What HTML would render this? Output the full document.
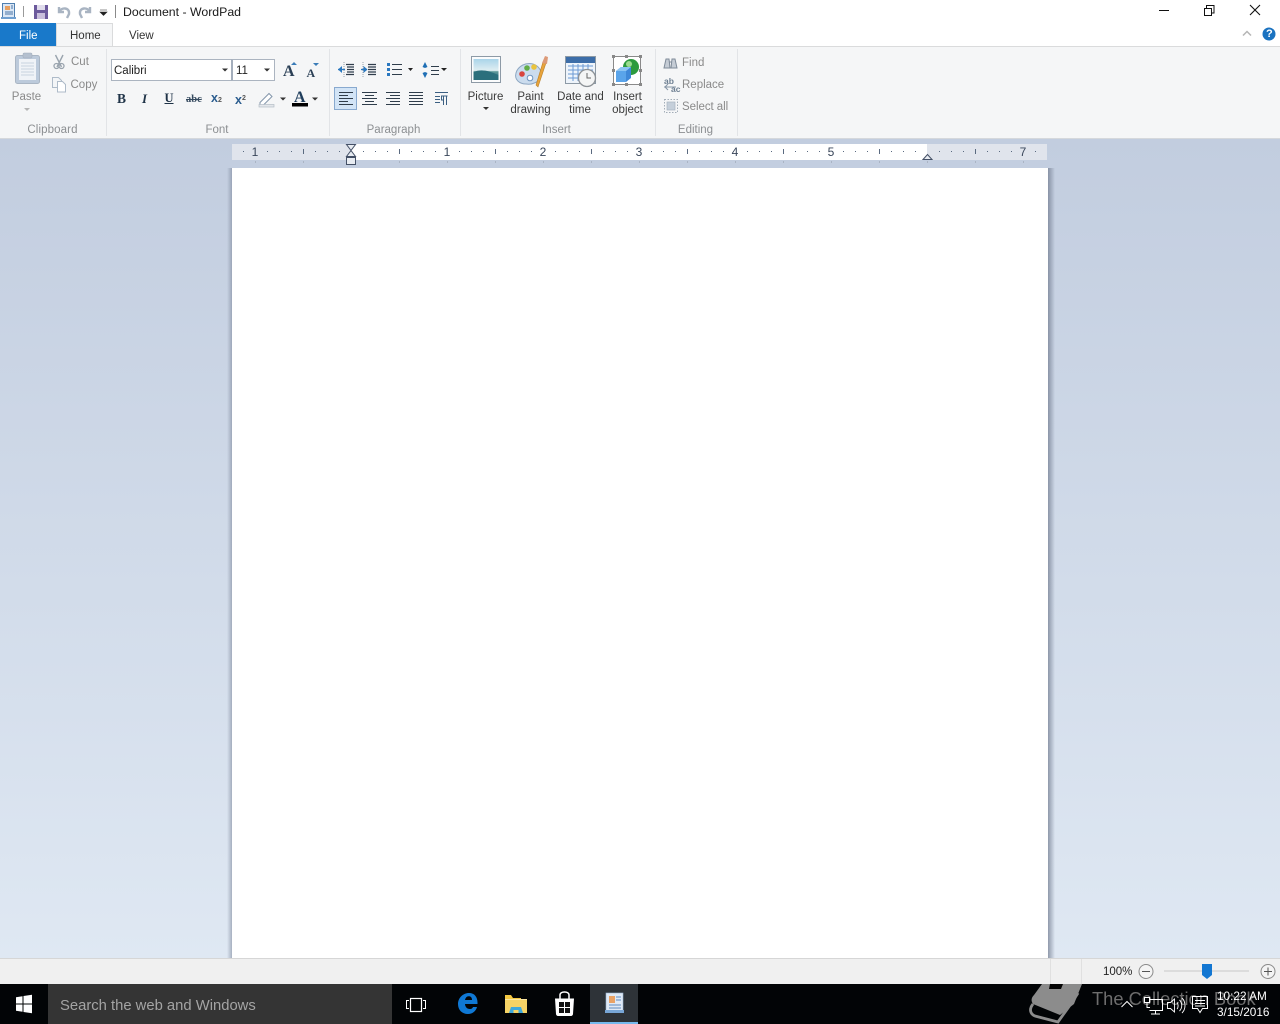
<!DOCTYPE html>
<html lang="en"><head><meta charset="utf-8"><title>Document - WordPad</title>
<style>
html,body{margin:0;padding:0}
body{width:1280px;height:1024px;position:relative;overflow:hidden;background:#fff;font-family:"Liberation Sans",sans-serif;font-size:11.5px;color:#3b3b3b}
.a{position:absolute;white-space:nowrap;line-height:14px}
.b{position:absolute}
.c{text-align:center;transform:translateX(-50%)}
.g{color:#8a8a8a}
.l{color:#8c8f92}
svg{position:absolute;overflow:visible}
</style></head><body>

<!-- Title bar -->
<div class="a" style="left:123px;top:5px;font-size:12.3px;color:#1a1a1a">Document - WordPad</div>
<svg style="left:0;top:0" width="125" height="24">
<rect x="2.5" y="3.5" width="12" height="15" fill="#dbe7f5" stroke="#4f7fb0"/>
<rect x="5" y="6" width="5" height="4" fill="#e8a060"/><path d="M11 6h2M11 8h2M5 12h8M5 14h8" stroke="#4a74a8"/>
<rect x="1" y="17" width="15" height="2" fill="#6f9fd0"/>
<path d="M23.5 6v11" stroke="#9a9a9a"/>
<rect x="34" y="5" width="14" height="14" fill="#6c5a9c"/><rect x="37" y="5" width="8" height="5" fill="#e0dcec"/><rect x="37" y="13" width="8" height="6" fill="#c9bfdc"/>
<path d="M59 7v5h5M59 12c2-5 11-5 10 2l-2 4" fill="none" stroke="#a9b4c2" stroke-width="2.4"/>
<path d="M90 7v5h-5M90 12c-2-5-11-5-10 2l2 4" fill="none" stroke="#a9b4c2" stroke-width="2.4"/>
<path d="M100 10h7M100 12l3.5 3.5L107 12z" fill="#222" stroke="#222" stroke-width=".6"/>
<path d="M115.500 5v13" stroke="#8a8a8a"/>
</svg>
<svg style="left:1150px;top:0" width="130" height="24" fill="none" stroke="#111">
<path d="M9 10.500h10"/>
<path d="M54.500 8.500h7v7h-7zM56.500 8V5.500h7.500v7.500h-2.500"/>
<path d="M100 5l10 10M110 5l-10 10" stroke-width="1.100"/>
</svg>

<!-- Tabs -->
<div class="b" style="left:0;top:23px;width:56px;height:23px;background:#1979ca"></div>
<div class="a" style="left:19px;top:28.500px;color:#fff;font-size:11.5px">File</div>
<div class="b" style="left:56px;top:23px;width:57px;height:24px;background:#f5f6f7;border:1px solid #dadbdc;border-bottom:0;box-sizing:border-box"></div>
<div class="a" style="left:70px;top:29px;font-size:11.5px;color:#333">Home</div>
<div class="a" style="left:129px;top:29px;font-size:11.5px;color:#333">View</div>
<svg style="left:1240px;top:26px" width="40" height="18">
<path d="M3 9.500l4-4 4 4" fill="none" stroke="#b5b5b5" stroke-width="1.500"/>
<circle cx="29" cy="8" r="6.500" fill="#1a72c0"/>
</svg>
<div class="a" style="left:1266px;top:27px;color:#fff;font-weight:bold;font-size:11px">?</div>

<!-- Ribbon -->
<div class="b" style="left:0;top:46px;width:1280px;height:93px;background:#f5f6f7;border-top:1px solid #dadbdc;box-sizing:border-box"></div>
<div class="b" style="left:0;top:138px;width:1280px;height:1px;background:#d5d8dc"></div>
<div class="b" style="left:106px;top:49px;width:1px;height:87px;background:#e2e4e7"></div>
<div class="b" style="left:329px;top:49px;width:1px;height:87px;background:#e2e4e7"></div>
<div class="b" style="left:460px;top:49px;width:1px;height:87px;background:#e2e4e7"></div>
<div class="b" style="left:655px;top:49px;width:1px;height:87px;background:#e2e4e7"></div>
<div class="b" style="left:737px;top:49px;width:1px;height:87px;background:#e2e4e7"></div>

<div class="a l c" style="left:52.500px;top:122.500px;letter-spacing:.12px">Clipboard</div>
<div class="a l c" style="left:217px;top:122.500px">Font</div>
<div class="a l c" style="left:393.500px;top:122.500px">Paragraph</div>
<div class="a l c" style="left:556.500px;top:122.500px">Insert</div>
<div class="a l c" style="left:695.500px;top:122.500px">Editing</div>

<!-- Clipboard -->
<svg style="left:0;top:48px" width="106" height="66">
<rect x="15.500" y="7.500" width="24" height="28" rx="2" fill="#bccadb" stroke="#aab6c4"/>
<rect x="19" y="11" width="17" height="21" fill="#f0f3f7"/>
<path d="M21 15h13M21 18h13M21 21h13M21 24h13M21 27h13" stroke="#c9d3df"/>
<rect x="23" y="5" width="9" height="5" rx="1" fill="#b4c0cf" stroke="#a0abb8" stroke-width=".5"/>
<path d="M24 60h6l-3 3z" fill="#b5b5b5"/>
<path d="M55.500 7l6 12M63 7l-6 12" stroke="#9aa4ae" stroke-width="1.400"/>
<circle cx="56.500" cy="18" r="2.500" fill="none" stroke="#9aa4ae" stroke-width="1.300"/><circle cx="61.500" cy="18" r="2.500" fill="none" stroke="#9aa4ae" stroke-width="1.300"/>
<path d="M52.500 29.500h6l3 3v7h-9z" fill="#f3f5f7" stroke="#aebbc9"/>
<path d="M57.500 33.500h5l3 3v7.500h-8z" fill="#fff" stroke="#aebbc9"/>
</svg>
<div class="a g c" style="left:26.500px;top:90px">Paste</div>
<div class="a g" style="left:71px;top:55px">Cut</div>
<div class="a g" style="left:70.500px;top:78px">Copy</div>

<!-- Font -->
<div class="b" style="left:111px;top:59px;width:122px;height:22px;background:#fff;border:1px solid #abb4c0;box-sizing:border-box"></div>
<div class="b" style="left:231px;top:59px;width:44px;height:22px;background:#fff;border:1px solid #abb4c0;border-left:2px solid #a4aebc;box-sizing:border-box"></div>
<div class="a" style="left:114px;top:63.500px;font-size:11.5px;color:#222">Calibri</div>
<div class="a" style="left:236px;top:63.500px;font-size:11.5px;color:#222">11</div>
<svg style="left:100px;top:50px" width="230" height="70">
<path d="M122 18.500h6l-3 3zM164 18.500h6l-3 3z" fill="#333"/>
<path d="M191 15l3-3 3 3zM213 13l3 3 3-3z" fill="#3a7cb8"/>
<path d="M180 47.500h6l-3 3zM212 47.500h6l-3 3z" fill="#333"/>
<path d="M160 52.500l9-9 3 3-9 9h-3z" fill="#fff" stroke="#8396ab"/>
<rect x="159" y="54.500" width="15" height="2.500" fill="#e3e6ea" stroke="#b3bcc6" stroke-width=".7"/>
<rect x="192" y="53" width="16" height="3.500" fill="#000"/>
</svg>
<div class="a" style="left:283px;top:63.500px;font:bold 16px/16px 'Liberation Serif',serif;color:#2a3f55">A</div>
<div class="a" style="left:306.500px;top:66.500px;font:bold 12px/13px 'Liberation Serif',serif;color:#2a3f55">A</div>
<div class="a" style="left:117px;top:91px;font:bold 13.500px/15px 'Liberation Serif',serif;color:#1f3347">B</div>
<div class="a" style="left:142px;top:91px;font:italic bold 13px/15px 'Liberation Serif',serif;color:#1f3347">I</div>
<div class="a" style="left:164.500px;top:91px;font:bold 12.500px/15px 'Liberation Serif',serif;color:#1f3347;text-decoration:underline">U</div>
<div class="a" style="left:186px;top:92px;font:bold 10.500px/15px 'Liberation Serif',serif;color:#34495e;text-decoration:line-through">abc</div>
<div class="a" style="left:211px;top:91px;font:bold 12.500px/14px 'Liberation Sans',sans-serif;color:#2b5d8f">x<span style="font-size:7px;color:#555">2</span></div>
<div class="a" style="left:235px;top:92px;font:bold 12.500px/14px 'Liberation Sans',sans-serif;color:#2b5d8f">x<span style="font-size:7px;color:#555;vertical-align:4px">2</span></div>
<div class="a" style="left:294px;top:89.500px;font:bold 16px/15px 'Liberation Serif',serif;color:#1f3d5c">A</div>

<!-- Paragraph -->
<div class="b" style="left:334px;top:87px;width:23px;height:23px;background:#d2e4f6;border:1px solid #88a9cf;box-sizing:border-box"></div>
<svg style="left:330px;top:48px" width="130" height="66" fill="none" stroke="#2f3d4b">
<path d="M16 16.500h8M17 19h7M17 21.500h7M17 24h7M16 26.500h8" stroke-width="1.300"/>
<path d="M8 21.500h7" stroke="#2a78c0" stroke-width="1.300"/>
<path d="M8 21.500l4-3.500v7z" fill="#2a78c0" stroke="none"/>
<path d="M14 14v15" stroke="#98a3ae" stroke-dasharray="1 1"/>
<path d="M38 16.500h8M38 19h8M38 21.500h8M38 24h8M38 26.500h8" stroke-width="1.300"/>
<path d="M31 21.500h6" stroke="#2a78c0" stroke-width="1.300"/>
<path d="M37.500 21.500l-4-3.500v7z" fill="#2a78c0" stroke="none"/>
<path d="M33 14v15" stroke="#98a3ae" stroke-dasharray="1 1"/>
<path d="M57 15h3v3h-3zM57 20h3v3h-3zM57 25h3v3h-3z" fill="#2a78c0" stroke="none"/>
<path d="M62 16.500h10M62 21.500h10M62 26.500h10"/>
<path d="M78 20h5l-2.500 3z" fill="#222" stroke="none"/>
<path d="M95 20l-2.500-1v0l2.500-5 2.500 5v0zM95 24l-2.500 1 2.500 5 2.500-5z" fill="#1f6fb5" stroke="none"/>
<path d="M101 18.500h8M101 22.500h8M101 26.500h8"/>
<path d="M111 20h6l-3 3z" fill="#222" stroke="none"/>
<path d="M9 44.500h14M9 47.500h9M9 50.500h14M9 53.500h9M9 56.500h14" stroke-width="1.100"/>
<path d="M32 44.500h15M35 47.500h9M32 50.500h15M35 53.500h9M32 56.500h15" stroke-width="1.100"/>
<path d="M56 44.500h14M60 47.500h10M56 50.500h14M60 53.500h10M56 56.500h14" stroke-width="1.100"/>
<path d="M79 44.500h14M79 47.500h14M79 50.500h14M79 53.500h14M79 56.500h14" stroke-width="1.100"/>
<path d="M105 44.500h13M105 48.500h5M105 51.500h5M105 54.500h5M113.500 48v9M116.500 48v9M117.500 48h-6v4h2" stroke="#3b5f82"/>
</svg>

<!-- Insert icons -->
<svg style="left:470px;top:52px" width="180" height="64">
<defs><linearGradient id="sky" x1="0" y1="0" x2="0" y2="1"><stop offset="0" stop-color="#a9d4e9"/><stop offset=".55" stop-color="#dfeef2"/><stop offset=".6" stop-color="#5f9a9b"/><stop offset="1" stop-color="#1e5f74"/></linearGradient></defs>
<rect x="1.500" y="4.500" width="29" height="26" fill="#fbfcfd" stroke="#8d9aa6"/>
<rect x="3.500" y="7" width="25" height="21" fill="url(#sky)"/>
<path d="M3.500 20c7-3 14-2 25 3v5h-25z" fill="#2a6f7c"/>
<path d="M46 21c2-7 10-11 17-9 6 2 9 7 8 12-1 6-9 9-15 8-6 0-12-4-10-11z" fill="#cbdcee" stroke="#8ea7c2"/>
<circle cx="52" cy="22" r="2.800" fill="#d8453e"/><circle cx="57" cy="16" r="2.800" fill="#62ad48"/><circle cx="64" cy="15" r="2.800" fill="#eac33c"/><circle cx="60" cy="26" r="2.800" fill="#fff" stroke="#6d94c0"/>
<path d="M66 33l2 2 8-24-3-1z" fill="#e8a33b" stroke="#b9812a" stroke-width=".6"/>
<path d="M72 11l3-7 3 1-1 7z" fill="#dc9a78"/>
<rect x="95.500" y="4.500" width="30" height="27" fill="#eef4fb" stroke="#8d9aa6"/>
<rect x="96" y="5" width="29" height="6" fill="#3c6da8"/>
<path d="M98 14h25M98 18h25M98 22h25M98 26h25M103 12v17M108 12v17M113 12v17M118 12v17" stroke="#6b9ad4"/>
<circle cx="117" cy="26" r="8.500" fill="#f4f5f5" stroke="#8c9196" stroke-width="1.300"/>
<path d="M117 21v5h4" fill="none" stroke="#666"/>
<rect x="143.500" y="4.500" width="27" height="28" fill="#fff" stroke="#8a8a8a"/>
<path d="M142 3h3v3h-3zM155 3h3v3h-3zM169 3h3v3h-3zM142 17h3v3h-3zM169 17h3v3h-3zM142 31h3v3h-3zM155 31h3v3h-3zM169 31h3v3h-3z" fill="#888"/>
<circle cx="161" cy="15" r="8" fill="#2c9a3e"/><circle cx="159" cy="12" r="3" fill="#9bdc8f"/>
<path d="M146 19l5-4h10v11l-5 4h-10z" fill="#3f88d8"/><path d="M146 19h10v11h-10z" fill="#5aa4ea"/><path d="M146 19l5-4h10l-5 4z" fill="#8cc4f2"/>
<path d="M13 55h6l-3 3z" fill="#333"/>
</svg>
<div class="a c" style="left:485.500px;top:90px">Picture</div>
<div class="a c" style="left:530.500px;top:90px">Paint</div>
<div class="a c" style="left:530.500px;top:103px">drawing</div>
<div class="a c" style="left:580.500px;top:90px">Date and</div>
<div class="a c" style="left:580px;top:103px">time</div>
<div class="a c" style="left:627.500px;top:90px">Insert</div>
<div class="a c" style="left:627.500px;top:103px">object</div>

<!-- Editing -->
<svg style="left:660px;top:52px" width="30" height="64">
<path d="M4 16l2-9h3l1 9zM11 16l1-9h3l2 9z" fill="#c5ccd5" stroke="#7f8b99"/>
<path d="M9 10h3" stroke="#7f8b99"/>
<path d="M4 35h12M8 32l-3 3 3 3" fill="none" stroke="#8595a6"/>
<rect x="4.500" y="47.500" width="13" height="13" fill="none" stroke="#a3adb8" stroke-dasharray="1.500 1.500"/>
<rect x="7" y="50" width="8" height="8" fill="#c5cfda" stroke="#a9b4c0" stroke-width=".7"/>
</svg>
<div class="a" style="left:664px;top:77px;font:bold 8.500px/9px 'Liberation Sans',sans-serif;color:#6d7f92">ab</div>
<div class="a" style="left:671px;top:85px;font:bold 8.500px/9px 'Liberation Sans',sans-serif;color:#6d7f92">ac</div>
<div class="a g" style="left:682px;top:55.500px">Find</div>
<div class="a g" style="left:682px;top:77.500px">Replace</div>
<div class="a g" style="left:682px;top:99.500px;letter-spacing:-.05px">Select all</div>

<!-- Workspace -->
<div class="b" style="left:0;top:139px;width:1280px;height:819px;background:linear-gradient(#c2cddf,#dfe8f3)"></div>
<!-- Page shadow and page -->
<div class="b" style="left:227px;top:168px;width:5px;height:790px;background:linear-gradient(90deg,rgba(120,130,150,0),rgba(120,130,150,.55))"></div>
<div class="b" style="left:1048px;top:168px;width:7px;height:790px;background:linear-gradient(90deg,rgba(110,120,140,.7),rgba(120,130,150,0))"></div>
<div class="b" style="left:232px;top:168px;width:816px;height:790px;background:#fff"></div>

<!-- Ruler -->
<div class="b" style="left:232px;top:144px;width:815px;height:16px;background:#e0e4ec"></div>
<div class="b" style="left:351px;top:144px;width:576px;height:16px;background:#fff"></div>
<svg style="left:232px;top:144px" width="816" height="24">
<defs><pattern id="rt" x="119" y="0" width="96" height="24" patternUnits="userSpaceOnUse">
<rect x="12" y="7" width="1" height="1" fill="#5a6a80"/><rect x="24" y="7" width="1" height="1" fill="#5a6a80"/><rect x="36" y="7" width="1" height="1" fill="#5a6a80"/>
<rect x="48" y="5" width="1" height="5" fill="#5a6a80"/>
<rect x="60" y="7" width="1" height="1" fill="#5a6a80"/><rect x="72" y="7" width="1" height="1" fill="#5a6a80"/><rect x="84" y="7" width="1" height="1" fill="#5a6a80"/>
<rect x="48" y="17" width="1" height="2" fill="#aab4c4"/><rect x="0" y="17" width="1" height="2" fill="#aab4c4"/>
</pattern></defs>
<rect x="11" y="0" width="796" height="22" fill="url(#rt)"/>
<path d="M114.500 .5h9l-4.500 6 4.500 6h-9l4.500-6zM114.500 13.500h9v7h-9z" fill="#e8ecf2" stroke="#445066"/>
<path d="M691 15.500l4.500-5 4.500 5z" fill="#e8ecf2" stroke="#445066"/>
</svg>
<div class="a c" style="left:255px;top:145px;font-size:12px;color:#39465a">1</div>
<div class="a c" style="left:447px;top:145px;font-size:12px;color:#39465a">1</div>
<div class="a c" style="left:543px;top:145px;font-size:12px;color:#39465a">2</div>
<div class="a c" style="left:639px;top:145px;font-size:12px;color:#39465a">3</div>
<div class="a c" style="left:735px;top:145px;font-size:12px;color:#39465a">4</div>
<div class="a c" style="left:831px;top:145px;font-size:12px;color:#39465a">5</div>
<div class="a c" style="left:1023px;top:145px;font-size:12px;color:#39465a">7</div>

<!-- Status bar -->
<div class="b" style="left:0;top:958px;width:1280px;height:26px;background:#f0f0f0;border-top:1px solid #d6d6d6;box-sizing:border-box"></div>
<div class="b" style="left:1050px;top:959px;width:1px;height:25px;background:#e0e0e0"></div>
<div class="b" style="left:1081px;top:959px;width:1px;height:25px;background:#e0e0e0"></div>
<div class="a" style="left:1103px;top:965px;font-size:11.5px;color:#222">100%</div>
<svg style="left:1135px;top:960px" width="145" height="24">
<circle cx="11" cy="11.500" r="7" fill="#f4f4f4" stroke="#8a8a8a"/><path d="M7 11.500h8" stroke="#555"/>
<rect x="29" y="10" width="85" height="2" fill="#dcdcdc"/>
<path d="M67 4h10v11l-5 4-5-4z" fill="#1377d2"/>
<circle cx="133" cy="11.500" r="7" fill="#f4f4f4" stroke="#8a8a8a"/><path d="M129 11.500h8M133 7.500v8" stroke="#555"/>
</svg>

<!-- Taskbar -->
<div class="b" style="left:0;top:984px;width:1280px;height:40px;background:#020406"></div>
<div class="b" style="left:48px;top:984px;width:344px;height:40px;background:#343434"></div>
<div class="a" style="left:60px;top:998px;font-size:14.800px;line-height:16px;color:#a4a4a4">Search the web and Windows</div>
<div class="b" style="left:590px;top:984px;width:48px;height:40px;background:#2e3338"></div>
<div class="b" style="left:590px;top:1022px;width:48px;height:2px;background:#76b9ed"></div>
<svg style="left:0;top:984px" width="640" height="40">
<path d="M16 13.200l6.500-1v7.300H16zM23.500 12l8.500-1.300v8.800h-8.500zM16 20.500h6.500v7.300L16 26.800zM23.500 20.500H32v8.800L23.500 28z" fill="#fff"/>
<path d="M409 16.500h-2.500v8h2.500M423 16.500h2.500v8H423" fill="none" stroke="#fff"/>
<rect x="410.500" y="14.500" width="11" height="13" fill="none" stroke="#fff" stroke-width="1.200"/>
<path d="M473 23h4c-1 4-4.500 7-9 7-6 0-10-4-10-10C458 14 463 9 469 9c5.500 0 8.500 4 8.500 9.500V20H465c.2 3 2 5 5 5 1.500 0 2.500-.8 3-2zm-8-7h7c0-2.500-1.200-3.800-3.300-3.800-1.900 0-3.200 1.500-3.700 3.800z" fill="#0f78d4"/>
<path d="M505 11h6l2 3h8v5h-16z" fill="#f4c842"/><rect x="505" y="15" width="22" height="14" fill="#f6d365"/>
<rect x="505" y="15" width="22" height="1" fill="#fbe6a0"/>
<path d="M511 23h10l2 6h-14z" fill="#3fa9dc"/>
<rect x="513.500" y="26" width="5" height="3" fill="#f6d365"/>
<path d="M555 14.500h19l-1 15.500c0 1-1 2-2 2h-13c-1 0-2-1-2-2z" fill="#fff"/>
<path d="M560 15v-4c0-2 2-3 4.500-3s4.500 1 4.500 3v4" fill="none" stroke="#fff" stroke-width="1.500"/>
<path d="M559 18h5v5h-5zM565 18h5v5h-5zM559 24h5v5h-5zM565 24h5v5h-5z" fill="#111"/>
<rect x="606" y="9" width="17" height="19" fill="#dfe9f5" stroke="#9ab4d0" stroke-width=".6"/>
<rect x="609" y="12" width="6" height="7" fill="#e9a265"/><path d="M616 13h5M616 16h5M609 21h12M609 24h12" stroke="#5f8cc0"/>
<rect x="605" y="26" width="19" height="3" fill="#78a6d6"/>
</svg>

<!-- Watermark -->
<svg style="left:1028px;top:984px" width="60" height="40">
<path d="M14 0L54 0L46 20L32 31L5 20C3 17 3 14 6 11Z" fill="#8c8c8c"/>
<path d="M22 0H35L33 5H21Z" fill="#050505"/>
<path d="M5 20C1 25 2 30 7 32L30 38C34 32 42 22 50 9" fill="none" stroke="#8c8c8c" stroke-width="2.800"/>
</svg>
<div class="a" style="left:1092px;top:989px;font-size:18.300px;line-height:20px;color:#6d6d6d">The Collection Book</div>

<!-- Tray -->
<svg style="left:1115px;top:984px" width="100" height="40" fill="none" stroke="#fff">
<path d="M6.500 23l5.500-5.500 5.500 5.500"/>
<path d="M29.500 13.500h5v5h-5z"/><path d="M34.500 15.500h13v11h-13M36.500 26.500h8M40.500 26.500v3M36 30h9M32 18.500v5h3"/>
<path d="M52.500 18.500h3l4-3.500v13l-4-3.500h-3zM62 18.500c1.500 1.500 1.500 5 0 6.500M64.500 16c3 3 3 8 0 11M67 14c4 4 4 11 0 15" stroke-width=".9"/>
<path d="M77.500 12.500h15v12h-5l-2.500 4-2.500-4h-5zM80 16.500h10M80 19.500h10M80 22h10" stroke-width="1"/>
</svg>
<div class="a" style="left:1217px;top:989px;font-size:11.800px;color:#fff">10:22 AM</div>
<div class="a" style="left:1217px;top:1005px;font-size:11.800px;color:#fff">3/15/2016</div>

</body></html>
